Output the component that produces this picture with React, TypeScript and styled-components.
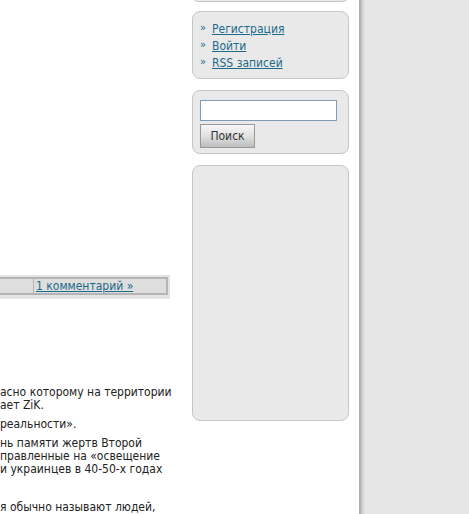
import React from "react";
import styled, { createGlobalStyle } from "styled-components";

const Global = createGlobalStyle`
  html, body { margin: 0; padding: 0; }
  body {
    background: #e6e6e6;
    font-family: Tahoma, "DejaVu Sans Condensed", "DejaVu Sans", sans-serif;
    font-size: 12px;
    color: #333;
  }
`;

const Page = styled.div`
  display: flex;
  width: 469px;
  height: 514px;
  overflow: hidden;
`;

const Sheet = styled.div`
  display: flex;
  width: 359px;
  background: #fff;
  flex-shrink: 0;
`;

const Edge = styled.div`
  width: 6px;
  flex-shrink: 0;
  background: linear-gradient(to right, #a9a9a9 0, #b8b8b8 2px, #cfcfcf 3px, #dcdcdc 5px, #e2e2e2 6px);
`;

const Main = styled.div`
  width: 170px;
  flex-shrink: 0;
  display: flex;
  flex-direction: column;
`;

const MetaBar = styled.div`
  margin-top: 275px;
  height: 26px;
  background: #e3e3e3;
  padding: 2px 2px 4px 0;
  box-sizing: border-box;
`;

const MetaInner = styled.div`
  height: 100%;
  box-sizing: border-box;
  border: 2px solid #b4b4b4;
  border-left: none;
  background: #dedede;
  display: flex;
`;

const MetaCell = styled.div<{ $w?: number }>`
  ${(p) => (p.$w ? `width: ${p.$w}px;` : "flex: 1;")}
  border-right: ${(p) => (p.$w ? "1px solid #b4b4b4" : "none")};
  display: flex;
  align-items: center;
  padding-left: ${(p) => (p.$w ? 0 : 2)}px;
`;

const Link = styled.a`
  color: #1d6a8b;
  text-decoration: underline;
  cursor: pointer;
`;

const Article = styled.div`
  margin-top: 87px;
  line-height: 13px;
  white-space: nowrap;
  color: #222;
`;

const Para = styled.p`
  margin: 0 0 6px 0;
`;

const Line = styled.span`
  display: block;
  height: 13px;
`;

const Sidebar = styled.div`
  margin-left: 22px;
  width: 157px;
  display: flex;
  flex-direction: column;
`;

const Box = styled.div<{ $h: number }>`
  box-sizing: border-box;
  height: ${(p) => p.$h}px;
  margin-bottom: 11px;
  background: #e9e9e9;
  border: 1px solid #c6c6c6;
  border-radius: 8px;
`;

const TopBox = styled(Box)`
  margin-top: -11px;
  margin-bottom: 9px;
`;

const LinkList = styled.ul`
  list-style: none;
  margin: 0;
  padding: 8px 0 0 7px;
`;

const LinkItem = styled.li`
  display: flex;
  align-items: center;
  height: 17px;
  gap: 4px;
`;

const Bullet = styled.span`
  color: #1d6a8b;
  font-size: 11px;
  width: 8px;
  margin-top: -3px;
`;

const SearchForm = styled.form`
  display: flex;
  flex-direction: column;
  align-items: flex-start;
  gap: 3px;
  padding: 9px 0 0 7px;
`;

const SearchInput = styled.input`
  box-sizing: border-box;
  width: 137px;
  height: 21px;
  border: 1px solid #7f9db9;
  background: #fff;
  margin: 0;
  padding: 0 2px;
  font: inherit;
`;

const SearchButton = styled.button`
  box-sizing: border-box;
  width: 55px;
  height: 24px;
  border: 1px solid #999;
  background: linear-gradient(to bottom, #f6f6f6 0%, #e2e2e2 50%, #bdbdbd 100%);
  font: inherit;
  color: #333;
  padding: 0;
  margin: 0;
`;

export default function App() {
  return (
    <>
      <Global />
      <Page>
        <Sheet>
          <Main>
            <MetaBar>
              <MetaInner>
                <MetaCell $w={33} />
                <MetaCell>
                  <Link>1 комментарий »</Link>
                </MetaCell>
              </MetaInner>
            </MetaBar>
            <Article>
              <Para>
                <Line>асно которому на территории</Line>
                <Line>ает ZiK.</Line>
              </Para>
              <Para>
                <Line>реальности».</Line>
              </Para>
              <Para>
                <Line>нь памяти жертв Второй</Line>
                <Line>правленные на «освещение</Line>
                <Line>и украинцев в 40-50-х годах</Line>
              </Para>
              <Para>
                <Line></Line>
              </Para>
              <Para>
                <Line>я обычно называют людей,</Line>
              </Para>
            </Article>
          </Main>
          <Sidebar>
            <TopBox $h={13} />
            <Box $h={68}>
              <LinkList>
                <LinkItem>
                  <Bullet>»</Bullet>
                  <Link>Регистрация</Link>
                </LinkItem>
                <LinkItem>
                  <Bullet>»</Bullet>
                  <Link>Войти</Link>
                </LinkItem>
                <LinkItem>
                  <Bullet>»</Bullet>
                  <Link>RSS записей</Link>
                </LinkItem>
              </LinkList>
            </Box>
            <Box $h={64}>
              <SearchForm onSubmit={(e) => e.preventDefault()}>
                <SearchInput type="text" />
                <SearchButton type="submit">Поиск</SearchButton>
              </SearchForm>
            </Box>
            <Box $h={256} />
          </Sidebar>
        </Sheet>
        <Edge />
      </Page>
    </>
  );
}
